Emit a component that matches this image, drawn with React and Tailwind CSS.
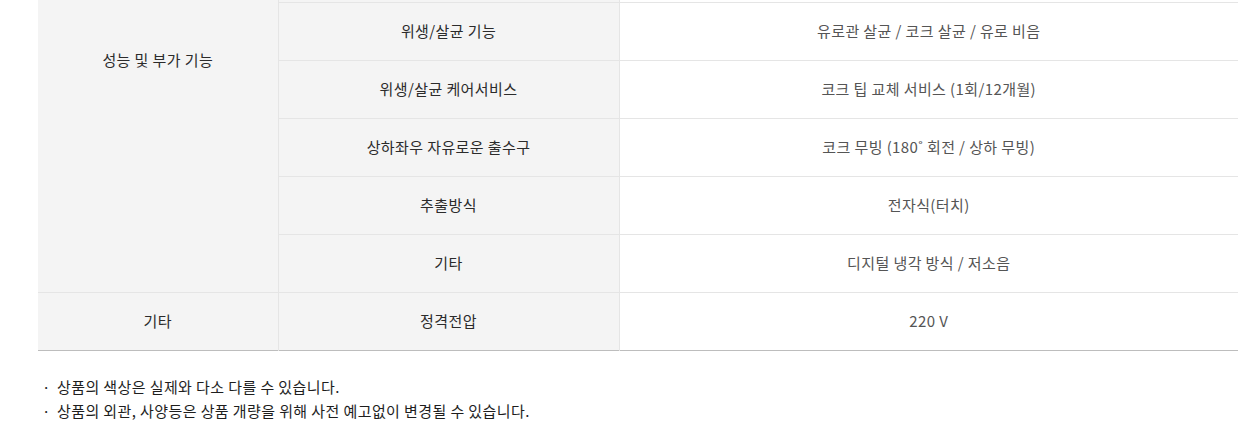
const font = {
  fontFamily: '"Noto Sans CJK KR", "Noto Sans", sans-serif',
};

// rows above the visible area, kept empty so the rowspan cell lines up
const hiddenRows = [
  ["", ""],
  ["", ""],
  ["", ""],
];

const rows = [
  ["위생/살균 기능", "유로관 살균 / 코크 살균 / 유로 비음"],
  ["위생/살균 케어서비스", "코크 팁 교체 서비스 (1회/12개월)"],
  ["상하좌우 자유로운 출수구", "코크 무빙 (180˚ 회전 / 상하 무빙)"],
  ["추출방식", "전자식(터치)"],
  ["기타", "디지털 냉각 방식 / 저소음"],
];

const th = "bg-[#f4f4f4] text-[#2b2b2b] text-[15px] tracking-[0.4px] font-normal text-center align-middle border-t border-[#e5e5e5]";
const td = "bg-white text-[#555] text-[15px] tracking-[0.4px] text-center align-middle border-t border-[#e5e5e5]";

export default function App() {
  const all = [...hiddenRows, ...rows];
  return (
    <div className="w-[1254px] h-[428px] overflow-hidden bg-white" style={font}>
      <div className="px-[38px] pr-[16px] mt-[-172px]">
        <table className="w-[1200px] border-collapse table-fixed border-b border-[#bdbdbd]">
          <colgroup>
            <col className="w-[240px]" />
            <col className="w-[341px]" />
            <col />
          </colgroup>
          <tbody>
            {all.map(([label, value], i) => (
              <tr key={i} className="h-[58px]">
                {i === 0 && (
                  <th rowSpan={all.length} className={th + " border-r border-[#e5e5e5]"}>
                    성능 및 부가 기능
                  </th>
                )}
                <th className={th + " border-r border-[#e5e5e5]"}>{label}</th>
                <td className={td}>{value}</td>
              </tr>
            ))}
            <tr className="h-[58px]">
              <th className={th + " border-r border-[#e5e5e5]"}>기타</th>
              <th className={th + " border-r border-[#e5e5e5]"}>정격전압</th>
              <td className={td}>220 V</td>
            </tr>
          </tbody>
        </table>
        <ul className="mt-[26px] flex flex-col gap-[5px] text-[15px] tracking-[0.4px] text-[#1e1e1e]">
          <li className="flex leading-[19px]">
            <span className="w-[19px] pl-[4px]">·</span>
            <span>상품의 색상은 실제와 다소 다를 수 있습니다.</span>
          </li>
          <li className="flex leading-[19px]">
            <span className="w-[19px] pl-[4px]">·</span>
            <span>상품의 외관, 사양등은 상품 개량을 위해 사전 예고없이 변경될 수 있습니다.</span>
          </li>
        </ul>
      </div>
    </div>
  );
}
